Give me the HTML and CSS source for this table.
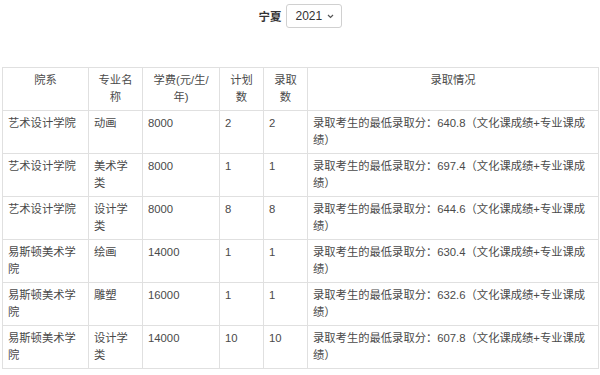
FILE: index.html
```html
<!DOCTYPE html>
<html lang="zh-CN">
<head>
<meta charset="utf-8">
<link rel="stylesheet" href="styles.css">
</head>
<body>
<div class="filter">
  <span class="label">宁夏</span>
  <div class="select">
    <span class="value">2021</span>
    <svg class="chev" width="7" height="5" viewBox="0 0 7 5"><path d="M1 1 L3.5 3.5 L6 1" fill="none" stroke="#555" stroke-width="1.2"/></svg>
  </div>
</div>
<table class="score">
  <colgroup>
    <col class="c1"><col class="c2"><col class="c3"><col class="c4"><col class="c5"><col class="c6">
  </colgroup>
  <thead>
    <tr><th>院系</th><th>专业名<br>称</th><th>学费(元/生/<br>年)</th><th>计划<br>数</th><th>录取<br>数</th><th>录取情况</th></tr>
  </thead>
  <tbody>
    <tr><td>艺术设计学院</td><td>动画</td><td>8000</td><td>2</td><td>2</td><td>录取考生的最低录取分：640.8（文化课成绩+专业课成绩）</td></tr>
    <tr><td>艺术设计学院</td><td>美术学类</td><td>8000</td><td>1</td><td>1</td><td>录取考生的最低录取分：697.4（文化课成绩+专业课成绩）</td></tr>
    <tr><td>艺术设计学院</td><td>设计学类</td><td>8000</td><td>8</td><td>8</td><td>录取考生的最低录取分：644.6（文化课成绩+专业课成绩）</td></tr>
    <tr><td>易斯顿美术学院</td><td>绘画</td><td>14000</td><td>1</td><td>1</td><td>录取考生的最低录取分：630.4（文化课成绩+专业课成绩）</td></tr>
    <tr><td>易斯顿美术学院</td><td>雕塑</td><td>16000</td><td>1</td><td>1</td><td>录取考生的最低录取分：632.6（文化课成绩+专业课成绩）</td></tr>
    <tr><td>易斯顿美术学院</td><td>设计学类</td><td>14000</td><td>10</td><td>10</td><td>录取考生的最低录取分：607.8（文化课成绩+专业课成绩）</td></tr>
  </tbody>
</table>
</body>
</html>
```
FILE: styles.css
```css
html, body {
  margin: 0;
  padding: 0;
  background: #fff;
}
body {
  font-family: "Liberation Sans", "Noto Sans CJK SC", sans-serif;
  color: #4a4a4a;
  overflow: hidden;
  text-spacing-trim: space-all;
}
.filter {
  display: flex;
  justify-content: center;
  align-items: center;
  gap: 4px;
  padding-top: 4px;
  height: 24px;
}
.label {
  font-size: 11.5px;
  font-weight: bold;
  color: #333;
}
.select {
  box-sizing: border-box;
  width: 56px;
  height: 24px;
  border: 1px solid #d0d0d0;
  border-radius: 3px;
  display: flex;
  align-items: center;
  justify-content: space-between;
  padding: 0 7px 0 9px;
  font-size: 12px;
  color: #333;
}
.chev {
  display: block;
}
.score {
  margin: 39px 0 0 2px;
  border-collapse: collapse;
  table-layout: fixed;
  width: 596px;
  font-size: 11.3px;
  line-height: 17px;
}
.c1 { width: 86px; }
.c2 { width: 54px; }
.c3 { width: 77px; }
.c4 { width: 44px; }
.c5 { width: 44px; }
.c6 { width: 291px; }
.score th,
.score td {
  border: 1px solid #e0e0e0;
  padding: 4px 5px;
  vertical-align: top;
  height: 34px;
}
.score th {
  font-weight: normal;
  text-align: center;
}
.score td {
  text-align: left;
}
```
